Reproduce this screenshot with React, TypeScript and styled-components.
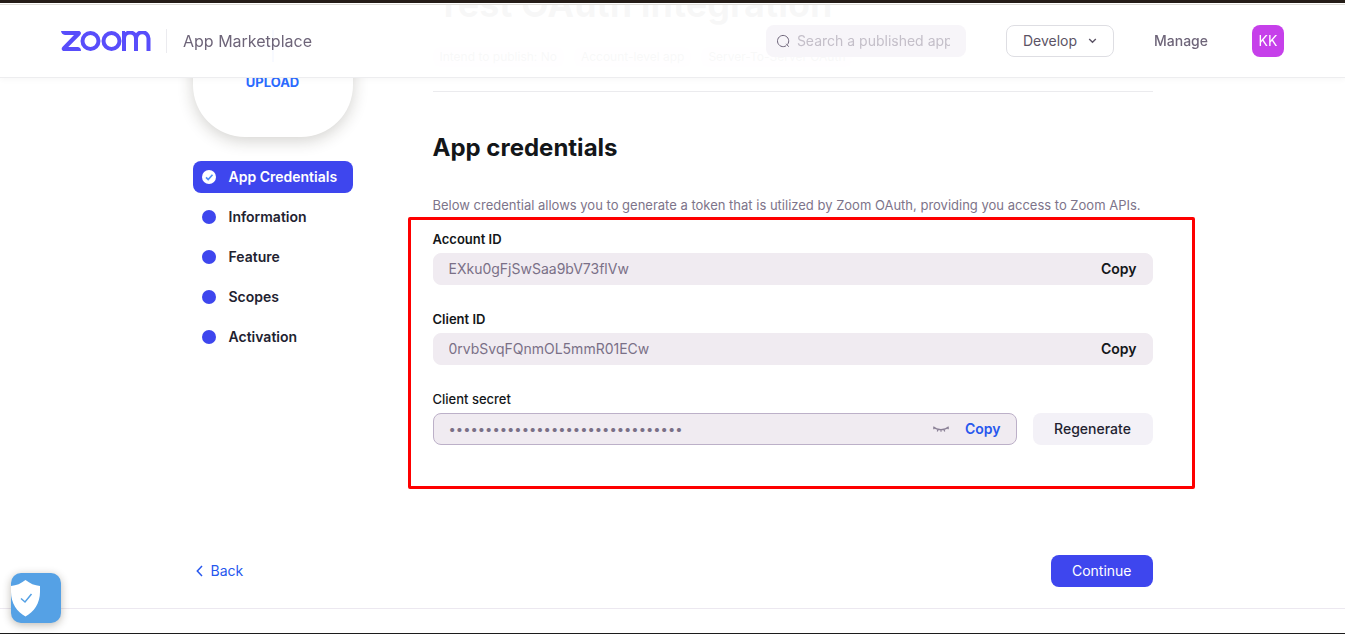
import React from "react";
import styled, { createGlobalStyle } from "styled-components";

const GlobalStyle = createGlobalStyle`
  * { box-sizing: border-box; }
  body {
    margin: 0;
    background: #fff;
    color: #131619;
    font-family: Inter, "Liberation Sans", sans-serif;
    font-size: 14px;
    line-height: 20px;
  }
  button, input { font: inherit; }
  button { cursor: pointer; }
`;

const Shell = styled.div`
  display: flex;
  flex-direction: column;
  min-height: 100vh;
  overflow: hidden;
`;

const Header = styled.header`
  position: fixed;
  top: 0;
  left: 0;
  right: 0;
  z-index: 2;
  display: flex;
  align-items: center;
  height: 78px;
  padding: 4px 61px 0;
  border-bottom: 1px solid #ededef;
  background: rgba(255, 255, 255, 0.97);
  box-shadow: 0 2px 6px rgba(0, 0, 0, 0.03);
`;

const TopStrip = styled.div`
  position: absolute;
  top: 0;
  left: 0;
  right: 0;
  height: 5px;
  border-top: 3px solid #241c17;
  border-bottom: 1px solid #dfddd8;
  background: #fff;
`;

const Brand = styled.a`
  display: flex;
  align-items: center;
  color: #6e6579;
  font-size: 16px;
  line-height: 24px;
  text-decoration: none;
`;

const BrandName = styled.span`
  margin-left: 15px;
  padding-left: 16px;
  border-left: 1px solid #ebebef;
`;

const HeaderActions = styled.div`
  display: flex;
  align-items: center;
  gap: 40px;
  margin-left: auto;
`;

const SearchBox = styled.label`
  display: flex;
  align-items: center;
  gap: 6px;
  width: 200px;
  height: 32px;
  padding: 0 16px 0 10px;
  border-radius: 8px;
  background: #f7f5f9;
`;

const SearchInput = styled.input`
  flex: 1;
  min-width: 0;
  padding: 0;
  border: 0;
  outline: 0;
  background: transparent;
  color: #6e6579;
  &::placeholder { color: #c4bfc9; opacity: 1; }
`;

const DevelopButton = styled.button`
  display: flex;
  align-items: center;
  gap: 11px;
  height: 32px;
  padding: 0 16px;
  border: 1px solid #dedee3;
  border-radius: 8px;
  background: #fff;
  color: #5b5365;
`;

const ManageLink = styled.a`
  margin-right: 4px;
  color: #6e6579;
  font-weight: 500;
  text-decoration: none;
`;

const Avatar = styled.button`
  width: 32px;
  height: 32px;
  padding: 0;
  border: 0;
  border-radius: 8px;
  background: #c640ea;
  color: #fff;
`;

const Main = styled.main`
  display: flex;
  gap: 80px;
  width: 100%;
  max-width: 960px;
  margin: 0 auto;
`;

const Sidebar = styled.aside`
  flex: 0 0 160px;
  display: flex;
  flex-direction: column;
`;

const UploadCard = styled.button`
  display: flex;
  flex-direction: column;
  align-items: center;
  gap: 10px;
  width: 160px;
  height: 137px;
  padding: 30px 0 0;
  border: 0;
  border-radius: 0 0 52px 52px;
  background: #fff;
  box-shadow: 0 4px 16px rgba(40, 35, 20, 0.2);
  color: #2b6bff;
  font-size: 13px;
  font-weight: 700;
`;

const Steps = styled.nav`
  display: flex;
  flex-direction: column;
  gap: 8px;
  margin-top: 24px;
`;

const Step = styled.a<{ $active?: boolean }>`
  display: flex;
  align-items: center;
  gap: 13px;
  height: 32px;
  padding: 0 9px;
  border-radius: 8px;
  background: ${(p) => (p.$active ? "#3e46ee" : "transparent")};
  color: ${(p) => (p.$active ? "#fff" : "#222230")};
  font-weight: 600;
  text-decoration: none;
`;

const Dot = styled.span`
  width: 14px;
  height: 14px;
  border-radius: 50%;
  background: #3e46ee;
`;

const Content = styled.div`
  flex: 1;
  min-width: 0;
`;

const AppTitle = styled.h1`
  margin: -18px 0 0 4px;
  font-size: 36px;
  font-weight: 700;
  line-height: 44px;
`;

const Tags = styled.div`
  display: flex;
  gap: 10px;
  margin-top: 21px;
  padding-bottom: 24px;
  border-bottom: 1px solid #ebebee;
`;

const Tag = styled.span`
  height: 20px;
  padding: 0 7px;
  border-radius: 6px;
  background: #e4e2ea;
  color: #222230;
  font-size: 12px;
`;

const SectionTitle = styled.h2`
  margin: 40px 0 0;
  font-size: 24px;
  font-weight: 700;
  line-height: 32px;
`;

const Intro = styled.p`
  margin: 31px 0 0;
  color: #7d748a;
  font-size: 13px;
  white-space: nowrap;
`;

const Highlight = styled.section`
  display: flex;
  flex-direction: column;
  gap: 24px;
  margin: 2px -42px 0 -25px;
  padding: 9px 39px 41px 22px;
  border: 3px solid #fe0000;
  border-radius: 2px;
`;

const Field = styled.div`
  display: flex;
  flex-direction: column;
  gap: 4px;
`;

const FieldLabel = styled.label<{ $weight: number }>`
  font-size: 13px;
  font-weight: ${(p) => p.$weight};
`;

const FieldRow = styled.div`
  display: flex;
  gap: 16px;
`;

const ValueBox = styled.div<{ $outlined?: boolean }>`
  flex: 1;
  display: flex;
  align-items: center;
  gap: 16px;
  min-height: 32px;
  padding: 0 15px;
  border: 1px solid ${(p) => (p.$outlined ? "#bcb0c8" : "#f0ebf1")};
  border-radius: 8px;
  background: #f0ebf1;
`;

const ValueInput = styled.input`
  flex: 1;
  min-width: 0;
  padding: 0;
  border: 0;
  outline: 0;
  background: transparent;
  color: #7a7087;
  &[type="password"] { font-size: 13px; }
`;

const CopyButton = styled.button<{ $accent?: boolean }>`
  padding: 0;
  border: 0;
  background: none;
  color: ${(p) => (p.$accent ? "#2757ee" : "#131619")};
  font-weight: 600;
`;

const IconButton = styled.button`
  display: flex;
  padding: 0;
  border: 0;
  background: none;
`;

const RegenerateButton = styled.button`
  width: 120px;
  height: 32px;
  padding: 0;
  border: 0;
  border-radius: 8px;
  background: #f3f1f7;
  color: #222230;
  font-weight: 500;
`;

const Pager = styled.div`
  display: flex;
  align-items: center;
  justify-content: space-between;
  width: 100%;
  max-width: 960px;
  margin: 66px auto 21px;
`;

const BackLink = styled.a`
  display: flex;
  align-items: center;
  gap: 8px;
  padding-left: 3px;
  color: #2757ee;
  text-decoration: none;
`;

const ContinueButton = styled.button`
  height: 32px;
  padding: 0 21px;
  border: 0;
  border-radius: 8px;
  background: #3e46ee;
  color: #fff;
`;

const Footer = styled.footer`
  flex: 1;
  min-height: 26px;
  border-top: 1px solid #ece8f0;
  border-bottom: 1px solid #1c1c1c;
`;

const PrivacyButton = styled.button`
  position: fixed;
  left: 11px;
  bottom: 11px;
  display: flex;
  align-items: center;
  width: 50px;
  height: 50px;
  padding: 0;
  border: 0;
  border-radius: 10px;
  background: #55a1e5;
  box-shadow: 0 2px 8px rgba(40, 30, 10, 0.3);
`;

const ZoomLogo = () => (
  <svg width="90" height="20" viewBox="0 0 90 20" fill="none" stroke="#584dfb" strokeWidth="4" aria-label="Zoom">
    <path d="M0 0H17.5C20 0 20.8 2.5 19 4.3L7.3 16H17Q20 16.6 20 20H3C.6 20 0 17.3 1.600 15.700L13 4H4Q.5 3.500 0 0Z" fill="#584dfb" stroke="none" />
    <circle cx="29.500" cy="10" r="8" />
    <circle cx="50.500" cy="10" r="8" />
    <path d="M63 20V7.500A5.500 5.500 0 0 1 75 7.500V20M75 20V7.500A5.500 5.500 0 0 1 87.500 7.500V20" />
    <path d="M61 0H64V20Q61 19.500 61 16Z" fill="#584dfb" stroke="none" />
  </svg>
);

const SearchIcon = () => (
  <svg width="15" height="14" viewBox="0 0 15 14" fill="none" stroke="#6e6579" strokeWidth="1">
    <path d="M10.200 11.700A5.600 5.600 0 1 1 11.500 10.500M10.200 9.800L12.700 12.700" />
  </svg>
);

const ChevronDown = () => (
  <svg width="9" height="6" viewBox="0 0 9 6" fill="none" stroke="#5b5365" strokeWidth="1.400">
    <path d="M1.200 1L4.500 4.200L7.800 1" />
  </svg>
);

const PlusIcon = () => (
  <svg width="32" height="32" viewBox="0 0 32 32" stroke="#2b6bff" strokeWidth="2">
    <path d="M16 0V32M0 16H32" />
  </svg>
);

const CheckedDot = () => (
  <svg width="14" height="14" viewBox="0 0 14 14" fill="none">
    <circle cx="7" cy="7" r="7" fill="#fff" />
    <path d="M4 7.300L6.200 9.500L10.500 4.800" stroke="#4d8df6" strokeWidth="1.700" />
  </svg>
);

const ClosedEye = () => (
  <svg width="16" height="8" viewBox="0 0 16 8" fill="none" stroke="#8b8197" strokeWidth="1.200">
    <path d="M.5 2C4 5.500 12 5.500 15.500 2M.8 1.500V4.300M15.200 1.500V4.300M5 4.300L4.300 6.500M8 4.600V6.800M11 4.300L11.700 6.500" />
  </svg>
);

const ChevronLeft = () => (
  <svg width="7" height="12" viewBox="0 0 7 12" fill="none" stroke="#2757ee" strokeWidth="1.500">
    <path d="M6 1L1.300 6L6 11" />
  </svg>
);

const ShieldIcon = () => (
  <svg width="29" height="38" viewBox="0 0 29 38" fill="none">
    <path d="M14.500 1C19 4.500 23.500 6.500 29 7V13C29 24 23 33 14.500 37.500C6 33 0 24 0 13V7C5.500 6.500 10 4.500 14.500 1Z" fill="#fff" />
    <path d="M10 19.500L14 23L20.500 15" stroke="#55a1e5" strokeWidth="1.500" />
  </svg>
);

const steps = ["Information", "Feature", "Scopes", "Activation"];
const tags = ["Intend to publish: No", "Account-level app", "Server-To-Server OAuth"];
const ids = [
  { id: "account-id", label: "Account ID", value: "EXku0gFjSwSaa9bV73flVw" },
  { id: "client-id", label: "Client ID", value: "0rvbSvqFQnmOL5mmR01ECw" },
];

export default function App() {
  return (
    <Shell>
      <GlobalStyle />
      <Header>
        <TopStrip />
        <Brand href="#">
          <ZoomLogo />
          <BrandName>App Marketplace</BrandName>
        </Brand>
        <HeaderActions>
          <SearchBox>
            <SearchIcon />
            <SearchInput type="text" aria-label="Search apps" placeholder="Search a published app" />
          </SearchBox>
          <DevelopButton>
            Develop
            <ChevronDown />
          </DevelopButton>
          <ManageLink href="#">Manage</ManageLink>
          <Avatar>KK</Avatar>
        </HeaderActions>
      </Header>
      <Main>
        <Sidebar>
          <UploadCard>
            <PlusIcon />
            UPLOAD
          </UploadCard>
          <Steps>
            <Step href="#" $active>
              <CheckedDot />
              App Credentials
            </Step>
            {steps.map((step) => (
              <Step href="#" key={step}>
                <Dot />
                {step}
              </Step>
            ))}
          </Steps>
        </Sidebar>
        <Content>
          <AppTitle>Test OAuth integration</AppTitle>
          <Tags>
            {tags.map((tag) => (
              <Tag key={tag}>{tag}</Tag>
            ))}
          </Tags>
          <SectionTitle>App credentials</SectionTitle>
          <Intro>
            Below credential allows you to generate a token that is utilized by Zoom OAuth, providing you access to Zoom APIs.
          </Intro>
          <Highlight>
            {ids.map((field) => (
              <Field key={field.id}>
                <FieldLabel htmlFor={field.id} $weight={600}>{field.label}</FieldLabel>
                <ValueBox>
                  <ValueInput id={field.id} type="text" readOnly value={field.value} />
                  <CopyButton>Copy</CopyButton>
                </ValueBox>
              </Field>
            ))}
            <Field>
              <FieldLabel htmlFor="client-secret" $weight={500}>Client secret</FieldLabel>
              <FieldRow>
                <ValueBox $outlined>
                  <ValueInput id="client-secret" type="password" readOnly value={"x".repeat(32)} />
                  <IconButton aria-label="Show secret">
                    <ClosedEye />
                  </IconButton>
                  <CopyButton $accent>Copy</CopyButton>
                </ValueBox>
                <RegenerateButton>Regenerate</RegenerateButton>
              </FieldRow>
            </Field>
          </Highlight>
        </Content>
      </Main>
      <Pager>
        <BackLink href="#">
          <ChevronLeft />
          Back
        </BackLink>
        <ContinueButton>Continue</ContinueButton>
      </Pager>
      <Footer />
      <PrivacyButton aria-label="Privacy settings">
        <ShieldIcon />
      </PrivacyButton>
    </Shell>
  );
}
